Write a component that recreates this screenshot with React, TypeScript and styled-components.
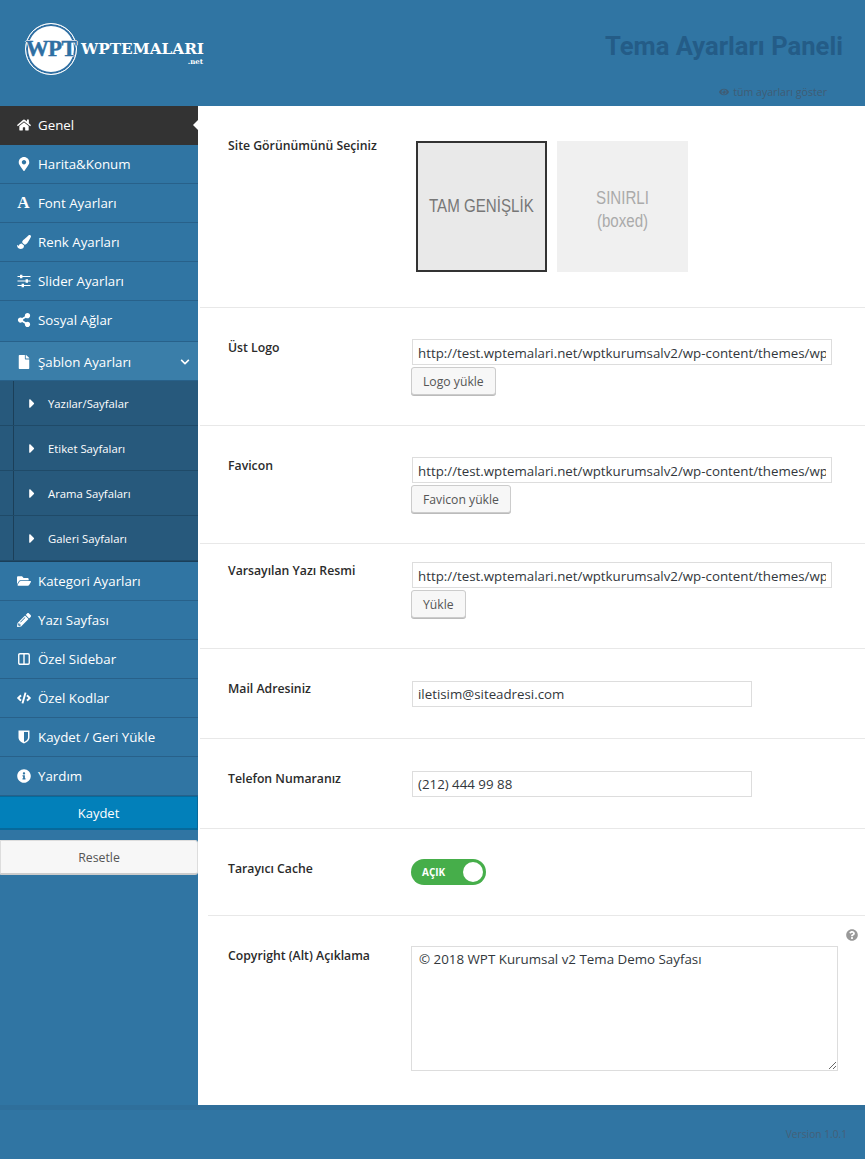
import styled, { createGlobalStyle } from 'styled-components';
import {
  FaCaretRight,
  FaChevronDown,
  FaCode,
  FaEye,
  FaFile,
  FaFolderOpen,
  FaHome,
  FaInfoCircle,
  FaMapMarkerAlt,
  FaPaintBrush,
  FaPencilAlt,
  FaQuestionCircle,
  FaShareAlt,
} from 'react-icons/fa';
import { Columns2 } from 'lucide-react';

const GlobalStyle = createGlobalStyle`
  * { box-sizing: border-box; }
  html, body { margin: 0; padding: 0; background: #3075a3; }
  body { font-family: "Open Sans", "Noto Sans", sans-serif; color: #333; }
`;

const SlidersIcon = () => (
  <svg viewBox="0 0 14 14" fill="currentColor">
    <path d="M0.5 1.9h13v1.2h-13zM0.5 6.4h13v1.2h-13zM0.5 10.9h13v1.2h-13z" />
    <path d="M3 0.7h2.4v3.6H3zM8.6 5.2h2.4v3.6H8.6zM4.6 9.7H7v3.6H4.6z" />
  </svg>
);

const ShieldIcon = () => (
  <svg viewBox="0 0 12 14" fill="currentColor">
    <path
      fillRule="evenodd"
      d="M0.5 0.5H11.5V7.5C11.5 10.5 8.5 12.5 6 13.5C3.5 12.5 0.5 10.5 0.5 7.5ZM6 2V12C8 11 10 9.6 10 7.5V2Z"
    />
  </svg>
);

const App = () => {
  return (
    <Page>
      <GlobalStyle />
      <Header>
        <Logo>
          <LogoMark>
            <LogoMarkText>WPT</LogoMarkText>
          </LogoMark>
          <LogoWords>
            <LogoName>WPTEMALARI</LogoName>
            <LogoTld>.net</LogoTld>
          </LogoWords>
        </Logo>
        <HeaderRight>
          <Title>Tema Ayarları Paneli</Title>
          <ShowAll>
            <FaEye />
            tüm ayarları göster
          </ShowAll>
        </HeaderRight>
      </Header>
      <Body>
        <Sidebar>
          <MenuItem $active>
            <MenuIcon><FaHome /></MenuIcon>
            Genel
          </MenuItem>
          <MenuItem>
            <MenuIcon><FaMapMarkerAlt /></MenuIcon>
            Harita&Konum
          </MenuItem>
          <MenuItem>
            <MenuIcon><SerifA>A</SerifA></MenuIcon>
            Font Ayarları
          </MenuItem>
          <MenuItem>
            <MenuIcon><FaPaintBrush /></MenuIcon>
            Renk Ayarları
          </MenuItem>
          <MenuItem>
            <MenuIcon><SlidersIcon /></MenuIcon>
            Slider Ayarları
          </MenuItem>
          <MenuItem $tall>
            <MenuIcon><FaShareAlt /></MenuIcon>
            Sosyal Ağlar
          </MenuItem>
          <MenuItem $open>
            <MenuIcon><FaFile /></MenuIcon>
            Şablon Ayarları
            <Chevron><FaChevronDown /></Chevron>
          </MenuItem>
          <SubMenu>
            {['Yazılar/Sayfalar', 'Etiket Sayfaları', 'Arama Sayfaları', 'Galeri Sayfaları'].map((name) => (
              <SubItem key={name}>
                <FaCaretRight />
                {name}
              </SubItem>
            ))}
          </SubMenu>
          <MenuItem>
            <MenuIcon><FaFolderOpen /></MenuIcon>
            Kategori Ayarları
          </MenuItem>
          <MenuItem>
            <MenuIcon><FaPencilAlt /></MenuIcon>
            Yazı Sayfası
          </MenuItem>
          <MenuItem>
            <MenuIcon><Columns2 strokeWidth={2.4} /></MenuIcon>
            Özel Sidebar
          </MenuItem>
          <MenuItem>
            <MenuIcon><FaCode /></MenuIcon>
            Özel Kodlar
          </MenuItem>
          <MenuItem>
            <MenuIcon><ShieldIcon /></MenuIcon>
            Kaydet / Geri Yükle
          </MenuItem>
          <MenuItem>
            <MenuIcon><FaInfoCircle /></MenuIcon>
            Yardım
          </MenuItem>
          <SaveButton>Kaydet</SaveButton>
          <ResetButton>Resetle</ResetButton>
        </Sidebar>
        <Main>
          <Row $height={202} $top={30}>
            <Label>Site Görünümünü Seçiniz</Label>
            <Tiles>
              <Tile $selected><TileText>TAM GENİŞLİK</TileText></Tile>
              <Tile><TileText>SINIRLI<br />(boxed)</TileText></Tile>
            </Tiles>
          </Row>
          <Row $height={118} $top={30}>
            <Label>Üst Logo</Label>
            <Control $offset={1}>
              <TextInput readOnly value="http://test.wptemalari.net/wptkurumsalv2/wp-content/themes/wpt-kurumsal/images/logo.png" />
              <UploadButton>Logo yükle</UploadButton>
            </Control>
          </Row>
          <Row $height={118} $top={30}>
            <Label>Favicon</Label>
            <Control $offset={1}>
              <TextInput readOnly value="http://test.wptemalari.net/wptkurumsalv2/wp-content/themes/wpt-kurumsal/images/favicon.png" />
              <UploadButton>Favicon yükle</UploadButton>
            </Control>
          </Row>
          <Row $height={105} $top={17}>
            <Label>Varsayılan Yazı Resmi</Label>
            <Control $offset={1}>
              <TextInput readOnly value="http://test.wptemalari.net/wptkurumsalv2/wp-content/themes/wpt-kurumsal/images/default.png" />
              <UploadButton>Yükle</UploadButton>
            </Control>
          </Row>
          <Row $height={90} $top={30}>
            <Label>Mail Adresiniz</Label>
            <Control $offset={2}>
              <TextInput $short readOnly value="iletisim@siteadresi.com" />
            </Control>
          </Row>
          <Row $height={90} $top={30}>
            <Label>Telefon Numaranız</Label>
            <Control $offset={2}>
              <TextInput $short readOnly value="(212) 444 99 88" />
            </Control>
          </Row>
          <Row $height={87} $top={30} $inset>
            <Label>Tarayıcı Cache</Label>
            <Control $offset={0}>
              <Toggle>
                AÇIK
                <ToggleKnob />
              </Toggle>
            </Control>
          </Row>
          <Row $height={189} $top={30} $last>
            <Label>Copyright (Alt) Açıklama</Label>
            <Control $offset={0}>
              <TextArea readOnly value="© 2018 WPT Kurumsal v2 Tema Demo Sayfası" />
            </Control>
            <HelpIcon><FaQuestionCircle /></HelpIcon>
          </Row>
        </Main>
      </Body>
      <Footer>Version 1.0.1</Footer>
    </Page>
  );
};

const Page = styled.div`
  width: 865px;
  min-height: 1159px;
  background: #3075a3;
`;

const Header = styled.header`
  height: 106px;
  display: flex;
  justify-content: space-between;
  padding: 23px 22px 0 25px;
`;

const Logo = styled.div`
  display: flex;
  align-items: flex-start;
  gap: 4px;
`;

const LogoMark = styled.div`
  width: 52px;
  height: 52px;
  border-radius: 50%;
  background: #fff;
  border: 1.5px solid #fff;
  box-shadow: inset 0 0 0 2px #2f6fa3;
  display: flex;
  align-items: center;
  justify-content: center;
`;

const LogoMarkText = styled.span`
  font-family: "Liberation Serif", serif;
  font-weight: 700;
  font-size: 23px;
  letter-spacing: -0.6px;
  color: #2f6fa3;
  -webkit-text-stroke: 0.4px #2f6fa3;
  text-shadow: 1px 0 0 #fff, -1px 0 0 #fff, 0 1px 0 #fff, 0 -1px 0 #fff;
`;

const LogoWords = styled.div`
  display: flex;
  flex-direction: column;
  align-items: flex-end;
  padding-top: 17px;
`;

const LogoName = styled.span`
  font-family: "DejaVu Serif", serif;
  font-weight: 700;
  font-size: 15.3px;
  line-height: 18px;
  color: #fff;
`;

const LogoTld = styled.span`
  font-family: "DejaVu Serif", serif;
  font-weight: 700;
  font-size: 7px;
  line-height: 8px;
  padding-right: 1px;
  color: #fff;
`;

const HeaderRight = styled.div`
  display: flex;
  flex-direction: column;
  align-items: flex-end;
`;

const Title = styled.h1`
  margin: 7px 0 0;
  font-family: Roboto, sans-serif;
  font-size: 25.6px;
  line-height: 32px;
  font-weight: 700;
  color: #245c87;
`;

const ShowAll = styled.span`
  margin-top: 22px;
  margin-right: 16px;
  display: flex;
  align-items: center;
  gap: 4px;
  font-size: 10.6px;
  line-height: 16px;
  color: #3f5c74;

  svg {
    width: 10px;
    height: 10px;
  }
`;

const Body = styled.div`
  display: flex;
  align-items: stretch;
`;

const Sidebar = styled.nav`
  width: 198px;
  flex: none;
  display: flex;
  flex-direction: column;
`;

const MenuItem = styled.a<{ $active?: boolean; $open?: boolean; $tall?: boolean }>`
  position: relative;
  height: ${(p) => (p.$tall ? 41 : 39)}px;
  display: flex;
  align-items: center;
  padding-left: 16px;
  padding-top: ${(p) => (p.$open ? 2 : 0)}px;
  padding-bottom: ${(p) => (p.$tall ? 2 : 0)}px;
  font-size: 13.3px;
  color: #fff;
  background: ${(p) => (p.$active ? '#333' : p.$open ? '#3a7ea9' : '#3075a3')};
  border-bottom: 1px solid ${(p) => (p.$active ? '#333' : '#28618a')};

  ${(p) =>
    p.$active &&
    `&::after {
      content: '';
      position: absolute;
      right: 0;
      top: 14px;
      border-style: solid;
      border-width: 5px 5px 5px 0;
      border-color: transparent #fff transparent transparent;
    }`}
`;

const MenuIcon = styled.span`
  width: 15px;
  margin-right: 7px;
  display: flex;
  align-items: center;
  justify-content: center;

  svg {
    flex: none;
    height: 14px;
    width: auto;
    max-width: 16px;
  }
`;

const SerifA = styled.span`
  font-family: "Liberation Serif", serif;
  font-weight: 700;
  font-size: 17px;
  line-height: 16px;
`;

const Chevron = styled.span`
  margin-left: auto;
  margin-right: 8px;
  display: flex;

  svg {
    width: 10px;
    height: 10px;
  }
`;

const SubMenu = styled.div`
  display: flex;
  flex-direction: column;
  background: #27597c;
  border-bottom: 1px solid #1b3f59;
`;

const SubItem = styled.a`
  height: 45px;
  display: flex;
  align-items: center;
  padding: 1px 0 0 29px;
  font-size: 11.3px;
  color: #fff;
  border-bottom: 1px solid #1f4a68;
  box-shadow: inset 13px 0 0 #27597c, inset 14px 0 0 #1b3f59;

  svg {
    flex: none;
    width: 6px;
    height: 15px;
    margin-right: 13px;
  }
`;

const SaveButton = styled.button`
  height: 34px;
  width: 198px;
  padding: 0;
  border: 0;
  border-top: 1px solid #06699b;
  border-bottom: 2px solid #06699b;
  border-right: 1px solid #06699b;
  background: #0280ba;
  color: #fff;
  font: 400 13px "Open Sans", sans-serif;
`;

const ResetButton = styled.button`
  height: 35px;
  width: 198px;
  margin-top: 10px;
  padding: 0;
  border: 1px solid #ddd;
  border-bottom: 2px solid #ccc;
  border-radius: 0 3px 3px 0;
  background: #f7f7f7;
  color: #555;
  font: 400 12.3px "Open Sans", sans-serif;
`;

const Main = styled.main`
  flex: 1;
  background: #fff;
`;

const Row = styled.section<{ $height: number; $top: number; $inset?: boolean; $last?: boolean }>`
  position: relative;
  height: ${(p) => p.$height}px;
  display: grid;
  grid-template-columns: 183px 1fr;
  align-items: start;
  padding: ${(p) => p.$top}px 0 0 30px;

  ${(p) =>
    !p.$last &&
    `&::after {
      content: '';
      position: absolute;
      left: ${p.$inset ? 10 : 2}px;
      right: 0;
      bottom: 0;
      height: 1px;
      background: #e8e8e8;
    }`}
`;

const Label = styled.label`
  font-size: 12.25px;
  line-height: 20px;
  font-weight: 600;
  color: #2b2b2b;
`;

const Control = styled.div<{ $offset: number }>`
  margin-top: ${(p) => p.$offset}px;
  display: flex;
  flex-direction: column;
  align-items: flex-start;
`;

const Tiles = styled.div`
  margin-top: 5px;
  padding-left: 5px;
  display: flex;
  gap: 10px;
`;

const Tile = styled.div<{ $selected?: boolean }>`
  width: 131px;
  height: 131px;
  display: flex;
  align-items: center;
  justify-content: center;
  padding: ${(p) => (p.$selected ? '0 0 1px' : '6px 0 0')};
  text-align: center;
  font-family: "Liberation Sans", sans-serif;
  font-size: 18px;
  line-height: 23px;
  color: ${(p) => (p.$selected ? '#777' : '#aaa')};
  background: ${(p) => (p.$selected ? '#e9e9e9' : '#f0f0f0')};
  border: 2px solid ${(p) => (p.$selected ? '#333' : '#f0f0f0')};
`;

const TileText = styled.span`
  display: block;
  flex: none;
  white-space: nowrap;
  transform: scaleX(0.84);
`;

const TextInput = styled.input<{ $short?: boolean }>`
  display: block;
  margin-left: 1px;
  width: ${(p) => (p.$short ? 340 : 420)}px;
  height: 26px;
  padding: ${(p) => (p.$short ? '0 5px' : '2px 5px 0')};
  border: 1px solid #ddd;
  outline: 0;
  font: 400 13.3px "Open Sans", sans-serif;
  color: #32373c;
  background: #fff;
`;

const UploadButton = styled.button`
  margin-top: 2px;
  height: 28px;
  padding: 0 11px;
  border: 1px solid #ccc;
  border-radius: 3px;
  background: #f7f7f7;
  box-shadow: 0 1px 0 #bbb;
  color: #555;
  font: 400 12.2px "Open Sans", sans-serif;
`;

const Toggle = styled.div`
  position: relative;
  width: 75px;
  height: 26px;
  padding-left: 11px;
  border-radius: 13px;
  background: #46ae4a;
  color: #fff;
  font-size: 10px;
  font-weight: 700;
  line-height: 26px;
`;

const ToggleKnob = styled.span`
  position: absolute;
  right: 3px;
  top: 3px;
  width: 20px;
  height: 20px;
  border-radius: 50%;
  background: #fff;
`;

const TextArea = styled.textarea`
  display: block;
  width: 427px;
  height: 125px;
  padding: 2px 7px;
  border: 1px solid #ddd;
  outline: 0;
  font: 400 13.35px/20px "Open Sans", sans-serif;
  color: #32373c;
  background: #fff;
`;

const HelpIcon = styled.span`
  position: absolute;
  right: 7px;
  top: 13px;
  display: flex;
  color: #999;

  svg {
    width: 12px;
    height: 12px;
  }
`;

const Footer = styled.footer`
  height: 54px;
  border-top: 5px solid #2f6f9b;
  padding: 14px 18px 0 0;
  text-align: right;
  font-size: 10.2px;
  line-height: 20px;
  color: #446078;
`;

export default App;
